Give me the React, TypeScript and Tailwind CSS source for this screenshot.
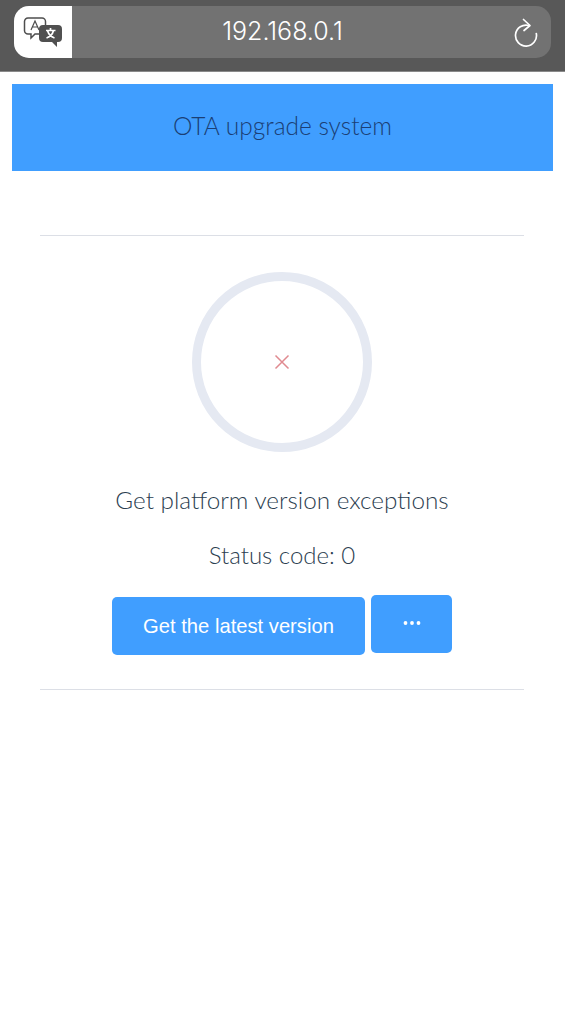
export default function App() {
  return (
    <div className="w-[565px] h-[1024px] bg-white flex flex-col overflow-hidden font-['Lato',sans-serif]">
      <div className="h-[72px] bg-[#585858] pt-[6px] pl-[14px] pr-[14px] shrink-0 border-b border-[#8a8a8a]">
        <div className="h-[52px] rounded-[15px] bg-[#727272] flex items-center overflow-hidden">
          <div className="w-[58px] h-full bg-white flex items-center justify-center shrink-0">
            <svg width="40" height="34" viewBox="0 0 40 34">
              <path d="M5 3h14a3.500 3.500 0 0 1 3.500 3.500v9a3.500 3.500 0 0 1-3.500 3.500h-7l-4 4v-4H5a3.500 3.500 0 0 1-3.500-3.500v-9A3.500 3.500 0 0 1 5 3z" fill="white" stroke="#4e4e4e" strokeWidth="1.500" />
              <path d="M8 15l4-9 4 9M9.500 12h5" fill="none" stroke="#4e4e4e" strokeWidth="1.200" />
              <path d="M20 10h15a4 4 0 0 1 4 4v9a4 4 0 0 1-4 4h-1v5l-5-5h-9a4 4 0 0 1-4-4v-9a4 4 0 0 1 4-4z" fill="#505050" />
              <path d="M23 15.500h9.500M27.500 13v2.500M30.500 15.500c-1 4-4 6.500-7 7.500M24.500 15.500c1 3.500 4 6.500 7 7.500" fill="none" stroke="white" strokeWidth="1.700" />
            </svg>
          </div>
          <div className="flex-1 h-full relative flex items-center justify-center pr-[58px] text-white text-[25px] font-['Inter',sans-serif] font-light">
            192.168.0.1
            <svg className="absolute right-[12px] top-[11px]" width="26" height="30" viewBox="0 0 26 30" fill="none" stroke="white" strokeWidth="1.700" strokeLinecap="round" strokeLinejoin="round">
              <path d="M16 8.500A10.500 10.500 0 1 0 23.300 16.500" />
              <path d="M10.500 2.500L17 8.500 11 13.500" />
            </svg>
          </div>
        </div>
      </div>
      <div className="mt-[12px] mx-[12px] h-[87px] w-[541px] bg-[#409eff] flex items-center justify-center pb-[3px] text-[#1b3f75] text-[24.500px] font-light">
        OTA upgrade system
      </div>
      <div className="mt-[64px] mx-[40px] w-[484px] flex flex-col items-center border-t border-b border-[#dcdfe6] h-[455px]">
        <div className="mt-[36px] w-[180px] h-[180px] rounded-full border-[9px] border-[#e5e9f2] flex items-center justify-center">
          <svg width="18" height="18" viewBox="0 0 18 18" fill="none" stroke="#e08a90" strokeWidth="1.500">
            <path d="M2.500 2.500l13 13M15.500 2.500l-13 13" />
          </svg>
        </div>
        <p className="mt-[32px] text-[24.300px] leading-[32px] font-light text-[#2c3e50]">Get platform version exceptions</p>
        <p className="mt-[23px] text-[24px] leading-[32px] font-light text-[#2c3e50]">Status code: 0</p>
        <div className="mt-[24px] flex items-start gap-[6px] font-['Liberation_Sans',sans-serif] text-white">
          <div className="mt-[2px] w-[253px] h-[58px] rounded-[5px] bg-[#409eff] flex items-center justify-center text-[20.200px]">Get the latest version</div>
          <div className="w-[81px] h-[58px] rounded-[5px] bg-[#409eff] flex items-center justify-center pb-[2px]">
            <svg width="20" height="6" viewBox="0 0 20 6" fill="white">
              <circle cx="3.500" cy="3" r="1.900" />
              <circle cx="10" cy="3" r="1.900" />
              <circle cx="16.500" cy="3" r="1.900" />
            </svg>
          </div>
        </div>
      </div>
    </div>
  );
}
